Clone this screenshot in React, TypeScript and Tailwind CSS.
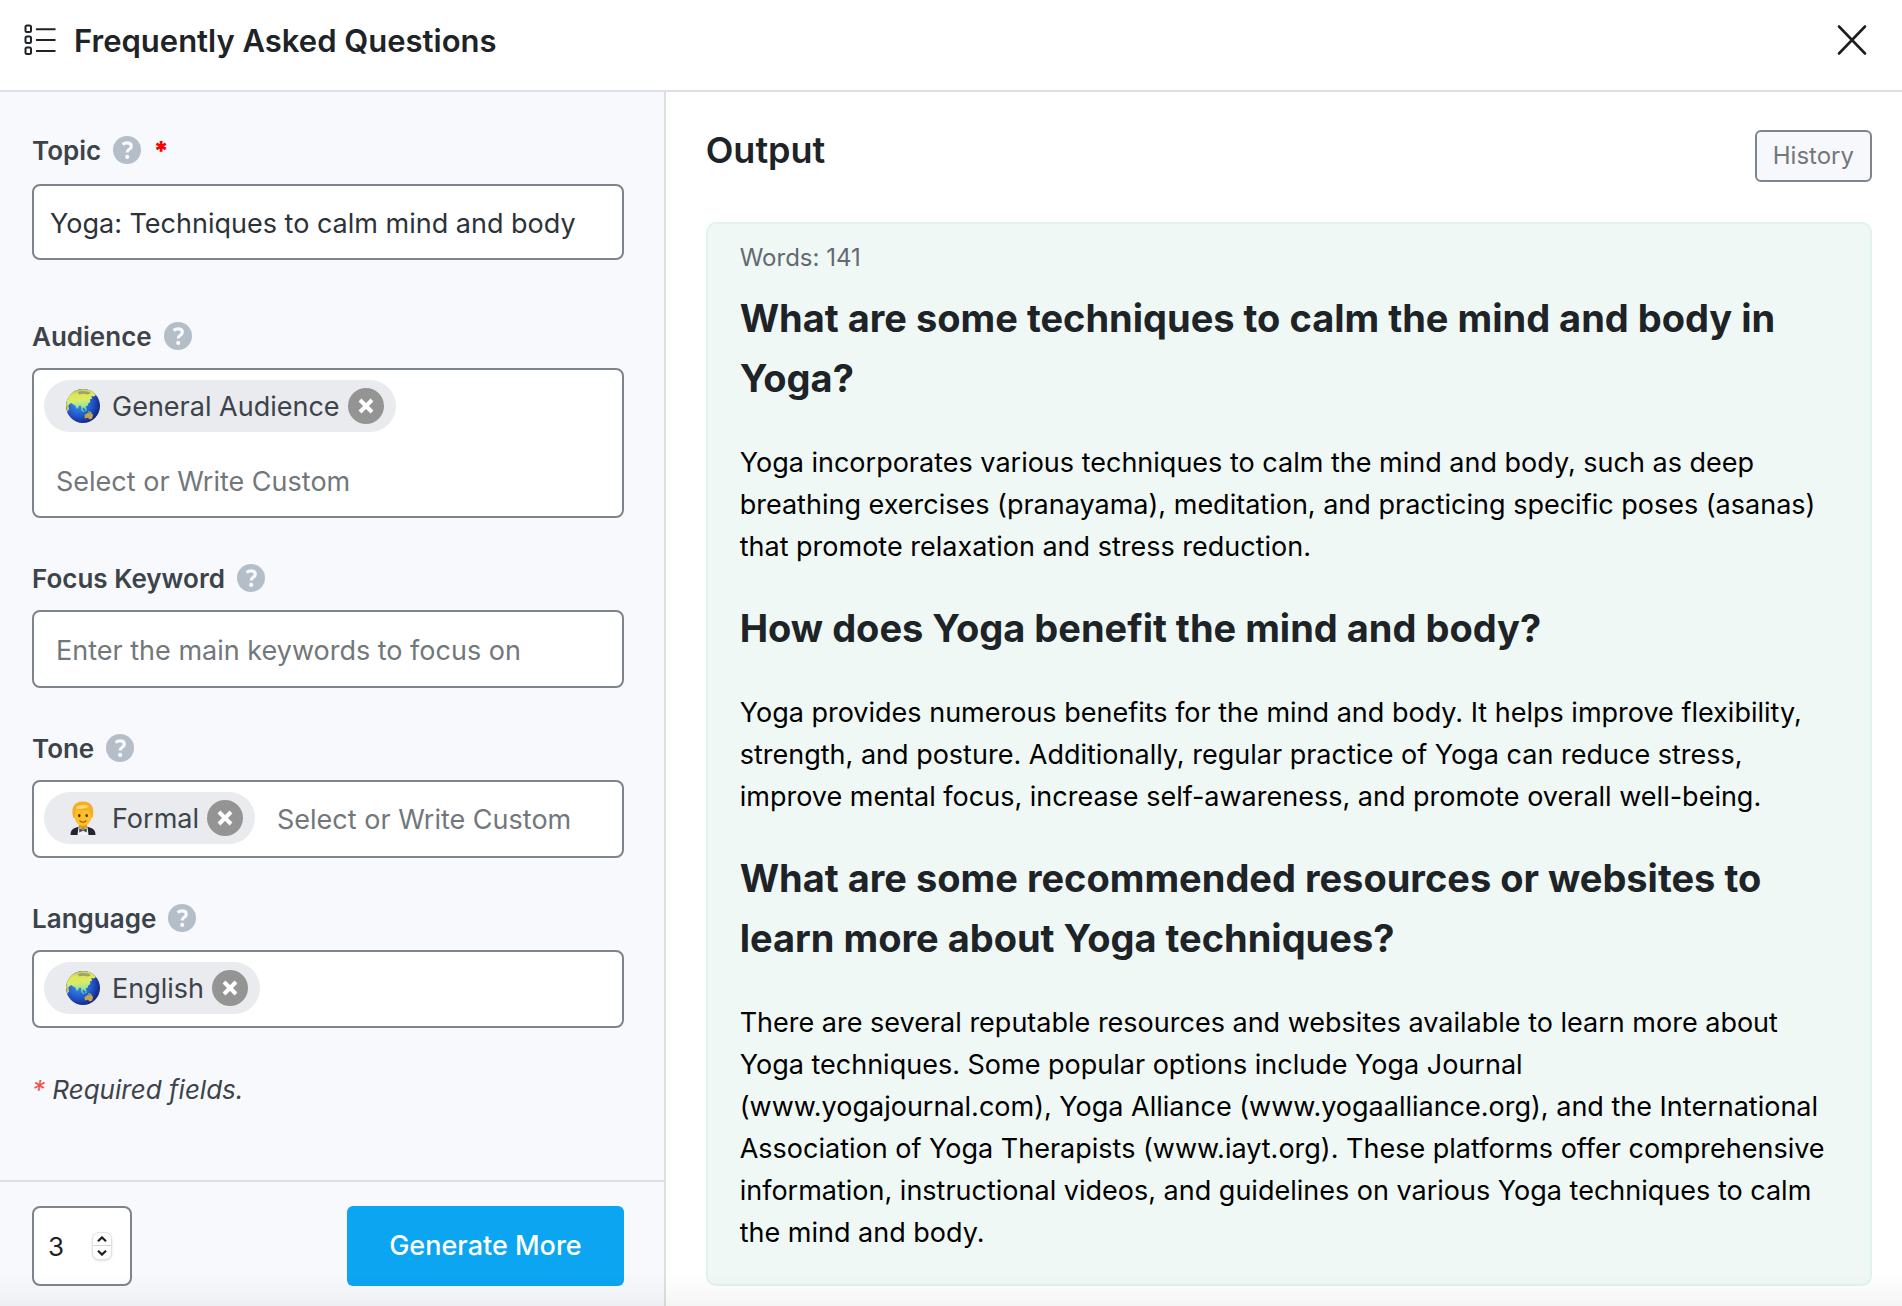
import { useState, type ReactNode } from 'react';

interface TagInfo {
  id: string;
  label: string;
  icon: 'globe' | 'person';
}

const FAQS = [
  {
    question: 'What are some techniques to calm the mind and body in Yoga?',
    answer:
      'Yoga incorporates various techniques to calm the mind and body, such as deep breathing exercises (pranayama), meditation, and practicing specific poses (asanas) that promote relaxation and stress reduction.',
  },
  {
    question: 'How does Yoga benefit the mind and body?',
    answer:
      'Yoga provides numerous benefits for the mind and body. It helps improve flexibility, strength, and posture. Additionally, regular practice of Yoga can reduce stress, improve mental focus, increase self-awareness, and promote overall well-being.',
  },
  {
    question: 'What are some recommended resources or websites to learn more about Yoga techniques?',
    answer:
      'There are several reputable resources and websites available to learn more about Yoga techniques. Some popular options include Yoga Journal (www.yogajournal.com), Yoga Alliance (www.yogaalliance.org), and the International Association of Yoga Therapists (www.iayt.org). These platforms offer comprehensive information, instructional videos, and guidelines on various Yoga techniques to calm the mind and body.',
  },
];

function ListIcon() {
  return (
    <svg width="32" height="36" viewBox="0 0 32 36" fill="none" stroke="#1d2327" strokeWidth="2" className="shrink-0">
      <rect x="1.500" y="3.500" width="5.500" height="6.500" rx="1.500" />
      <rect x="1.500" y="14.500" width="5.500" height="6.500" rx="1.500" />
      <rect x="1.500" y="25.500" width="5.500" height="6.500" rx="1.500" />
      <path d="M12 7.200h19.500M12 18h19.500M12 29h19.500" />
    </svg>
  );
}

function CloseIcon() {
  return (
    <svg width="32" height="32" viewBox="0 0 32 32" fill="none" stroke="#1e1e1e" strokeWidth="2.600" strokeLinecap="round">
      <path d="M3 2.500l26 27M29 2.500l-26 27" />
    </svg>
  );
}

function HelpIcon() {
  return (
    <svg width="28" height="28" viewBox="0 0 28 28" className="shrink-0" aria-hidden="true">
      <circle cx="14" cy="14" r="14" fill="#b4bec9" />
      <path
        d="M9.600 8.400c1.300-1 2.800-1.500 4.400-1.500 2.600 0 4.300 1.200 4.300 3.300 0 3-4 3-4 5.700v.6"
        fill="none"
        stroke="#f7f9fc"
        strokeWidth="3.200"
      />
      <circle cx="14.200" cy="20.900" r="2.100" fill="#f7f9fc" />
    </svg>
  );
}

function GlobeIcon() {
  return (
    <svg width="34" height="34" viewBox="0 0 34 34" className="shrink-0" aria-hidden="true">
      <defs>
        <radialGradient id="sea" cx="0.38" cy="0.4" r="0.65">
          <stop offset="0" stopColor="#3f9be8" />
          <stop offset="0.6" stopColor="#2158cf" />
          <stop offset="1" stopColor="#14247c" />
        </radialGradient>
        <linearGradient id="land" x1="0" y1="0" x2="0.2" y2="1">
          <stop offset="0" stopColor="#a9ae62" />
          <stop offset="0.3" stopColor="#e3e552" />
          <stop offset="0.6" stopColor="#d5ee6a" />
          <stop offset="1" stopColor="#7edcb0" />
        </linearGradient>
        <clipPath id="disc">
          <circle cx="17" cy="17" r="17" />
        </clipPath>
      </defs>
      <circle cx="17" cy="17" r="17" fill="url(#sea)" />
      <g clipPath="url(#disc)">
        <path
          d="M1 10C4 4 10 0 17 0c6 0 10 2 13 6l-2 1.500-2.500-.5.5 3-2 .2.3 2.800-1.800 1.200-1 2.600-2 .6 1 2.600-1.300.5-1.600-2-1 .4.4 3.200-1.400-2.400-.6-3-1.600-.2-2.400 3.800-1.500-3.600L5 14l-2.500 2.200L0 17z"
          fill="url(#land)"
        />
        <path d="M12 3c4-2 10-1 13 1l-3 1.600-5-.8-4 .6z" fill="#9aa368" />
        <path d="M0 15l2.400 1.200.6 4-2 3z" fill="#d9c34a" />
        <path d="M15 20l3 3M19 22l2-1.400M22 22.600l3.400 1" stroke="#58c98f" strokeWidth="1.100" />
        <path d="M18.500 26l3.500-2.200 1.500.4 1.400-.8 2.200 2.600-.9 3.600-2.400.8-2-1.600-2.900.6z" fill="#c9a24d" />
      </g>
    </svg>
  );
}

function PersonIcon() {
  return (
    <svg width="34" height="34" viewBox="0 0 34 34" className="shrink-0" aria-hidden="true">
      <path d="M4.500 34c0-4 1.600-6.400 5-7.200l4-1.300h7l4 1.300c3.400.8 5 3.200 5 7.200z" fill="#22252b" />
      <path d="M12.500 26l4.500 2 4.500-2 1 8h-11z" fill="#f1f3f6" />
      <path d="M13 21h8v5c-1 2-7 2-8 0z" fill="#e59a12" />
      <path d="M13.200 27.200l3.800 1.600 3.800-1.600v4.200L17 29.800l-3.800 1.600z" fill="#4c4f57" />
      <ellipse cx="17" cy="15" rx="8.600" ry="9.800" fill="#fdc02b" />
      <path d="M7.400 17C4.500 7 8 .6 16.500.6c8.600 0 12.600 5.400 10.100 16.400l-1.600-.4c.2-3.600-.6-5.800-2.600-7.400-4 .8-8.200.4-11.200-1C9.200 10 8.900 13 9 16.600z" fill="#f6ad24" />
      <path d="M10 6.500c3-3.300 10-3.800 13-1.200-3 2.300-8 3.200-12.500 2.500z" fill="#ffd76a" />
      <ellipse cx="13.300" cy="14.600" rx="1.200" ry="1.600" fill="#4b2b13" />
      <ellipse cx="20.700" cy="14.600" rx="1.200" ry="1.600" fill="#4b2b13" />
      <path d="M14 20c1.800 1.500 4.200 1.500 6 0" stroke="#a8540d" strokeWidth="1.200" fill="none" strokeLinecap="round" />
    </svg>
  );
}

function Label({ htmlFor, required, children }: { htmlFor: string; required?: boolean; children: ReactNode }) {
  return (
    <div className="flex h-8 items-center">
      <label htmlFor={htmlFor} className="mr-3 pt-0.5 text-[26px] leading-8 font-semibold text-[#3c434a]">
        {children}
      </label>
      <HelpIcon />
      {required && <span className="ml-3 pt-0.5 text-[26px] leading-8 font-black text-[#ff0000]">*</span>}
    </div>
  );
}

function TagField({ id, placeholder, initial }: { id: string; placeholder?: string; initial: TagInfo[] }) {
  const [tags, setTags] = useState(initial);

  return (
    <div className="flex min-h-[78px] flex-wrap gap-x-[10px] gap-y-[22px] rounded-[8px] border-2 border-[#7e848c] bg-white p-[10px]">
      {tags.map((t) => (
        <span key={t.id} className="flex h-[52px] items-center rounded-full bg-[#e9ebef] pr-3 pl-[22px]">
          {t.icon === 'globe' ? <GlobeIcon /> : <PersonIcon />}
          <span className="mr-2 ml-3 pt-0.5 text-[27px] leading-9 text-[#3c434a]">{t.label}</span>
          <button
            type="button"
            aria-label={`Remove ${t.label}`}
            onClick={() => setTags(tags.filter((x) => x.id !== t.id))}
            className="flex size-9 items-center justify-center rounded-full bg-[#949494]"
          >
            <svg width="16" height="16" viewBox="0 0 16 16" stroke="#fff" strokeWidth="4">
              <path d="M2 2l12 12M14 2L2 14" />
            </svg>
          </button>
        </span>
      ))}
      <input
        id={id}
        placeholder={placeholder}
        className="h-[52px] min-w-0 flex-[1_1_310px] px-3 pt-0.5 text-[27px] text-[#2c3338] outline-none placeholder:text-[#72777c]"
      />
    </div>
  );
}

export default function App() {
  const [topic, setTopic] = useState('Yoga: Techniques to calm mind and body');
  const [count, setCount] = useState(3);

  return (
    <div className="relative flex min-h-screen flex-col bg-white font-['Inter','Liberation_Sans',sans-serif]">
      <header className="flex h-[92px] items-center justify-between border-b-2 border-[#dcdfe4] pr-[34px] pb-[10px] pl-6">
        <div className="flex items-center gap-[18px]">
          <ListIcon />
          <h1 className="pt-0.5 text-[31px] leading-10 font-semibold text-[#1d2327]">Frequently Asked Questions</h1>
        </div>
        <button type="button" aria-label="Close">
          <CloseIcon />
        </button>
      </header>

      <main className="flex flex-1">
        <aside className="flex w-[35%] shrink-0 flex-col border-r-2 border-[#dcdfe4] bg-[#f7f9fc]">
          <div className="flex flex-1 flex-col pt-[42px] pr-10 pl-8">
            <Label htmlFor="topic" required>Topic</Label>
            <input
              id="topic"
              value={topic}
              onChange={(e) => setTopic(e.target.value)}
              className="mt-[18px] h-[76px] rounded-[8px] border-2 border-[#7e848c] bg-white px-4 pt-0.5 text-[27px] text-[#2c3338]"
            />

            <div className="mt-[60px] flex flex-col gap-4">
              <Label htmlFor="audience">Audience</Label>
              <TagField
                id="audience"
                placeholder="Select or Write Custom"
                initial={[{ id: 'general', label: 'General Audience', icon: 'globe' }]}
              />
            </div>

            <div className="mt-11 flex flex-col gap-4">
              <Label htmlFor="keyword">Focus Keyword</Label>
              <input
                id="keyword"
                placeholder="Enter the main keywords to focus on"
                className="h-[78px] rounded-[8px] border-2 border-[#7e848c] bg-white px-[22px] pt-0.5 text-[27px] text-[#2c3338] placeholder:text-[#72777c]"
              />
            </div>

            <div className="mt-11 flex flex-col gap-4">
              <Label htmlFor="tone">Tone</Label>
              <TagField
                id="tone"
                placeholder="Select or Write Custom"
                initial={[{ id: 'formal', label: 'Formal', icon: 'person' }]}
              />
            </div>

            <div className="mt-11 flex flex-col gap-4">
              <Label htmlFor="language">Language</Label>
              <TagField id="language" initial={[{ id: 'english', label: 'English', icon: 'globe' }]} />
            </div>

            <p className="mt-11 text-[26px] leading-9 text-[#3c434a] italic">
              <span className="text-[#f05252]">*</span> Required fields.
            </p>
          </div>

          <div className="flex items-center justify-between border-t-2 border-[#dcdfe4] pt-6 pr-10 pb-5 pl-8">
            <div className="flex h-20 w-[100px] items-center justify-between rounded-[8px] border-2 border-[#7e848c] bg-white pr-[18px] pl-[14px]">
              <input
                type="number"
                aria-label="Number of outputs"
                value={count}
                onChange={(e) => setCount(Number(e.target.value))}
                className="w-9 [appearance:textfield] text-[26px] text-[#1d2327] outline-none [&::-webkit-inner-spin-button]:appearance-none"
              />
              <div className="flex shrink-0 flex-col rounded-[7px] border border-[#e2e2e2] bg-white shadow-sm">
                <button type="button" aria-label="Increase" onClick={() => setCount(count + 1)} className="flex h-[13px] w-[18px] items-center justify-center border-b border-[#d4d4d4]">
                  <svg width="10" height="6" viewBox="0 0 10 6" fill="none" stroke="#1e1e1e" strokeWidth="2.200">
                    <path d="M1 5.200l4-3.800 4 3.800" />
                  </svg>
                </button>
                <button type="button" aria-label="Decrease" onClick={() => setCount(Math.max(1, count - 1))} className="flex h-[13px] w-[18px] items-center justify-center">
                  <svg width="10" height="6" viewBox="0 0 10 6" fill="none" stroke="#1e1e1e" strokeWidth="2.200">
                    <path d="M1 .8l4 3.800L9 .8" />
                  </svg>
                </button>
              </div>
            </div>
            <button type="button" className="h-20 rounded-[6px] bg-[#0ba5f2] px-[42px] text-[27px] font-medium text-white">
              Generate More
            </button>
          </div>
        </aside>

        <section className="flex min-w-0 flex-1 flex-col pt-[38px] pr-[30px] pb-5 pl-10">
          <div className="flex items-start justify-between">
            <h2 className="text-[36px] leading-10 font-semibold text-[#1d2327]">Output</h2>
            <button type="button" className="h-[52px] rounded-[6px] border-2 border-[#7e848c] bg-[#f7f8fc] px-4 text-[24px] text-[#72777c]">
              History
            </button>
          </div>

          <div className="mt-10 flex-1 rounded-[10px] border-2 border-[#e2f3ee] bg-[#eff8f5] px-8 pt-[18px] pb-7">
            <p className="mb-[14px] text-[24px] leading-8 text-[#646970]">Words: 141</p>
            {FAQS.map((f) => (
              <article key={f.question} className="mb-[30px] last:mb-0">
                <h3 className="mb-[34px] text-[38px] leading-[60px] font-bold text-[#1d2327]">{f.question}</h3>
                <p className="text-[27px] leading-[42px] text-black">{f.answer}</p>
              </article>
            ))}
          </div>
        </section>
      </main>

      {/* soft shade along the lower edge */}
      <div className="pointer-events-none absolute inset-x-0 bottom-0 h-8 bg-linear-to-b from-transparent to-black/4" />
    </div>
  );
}
